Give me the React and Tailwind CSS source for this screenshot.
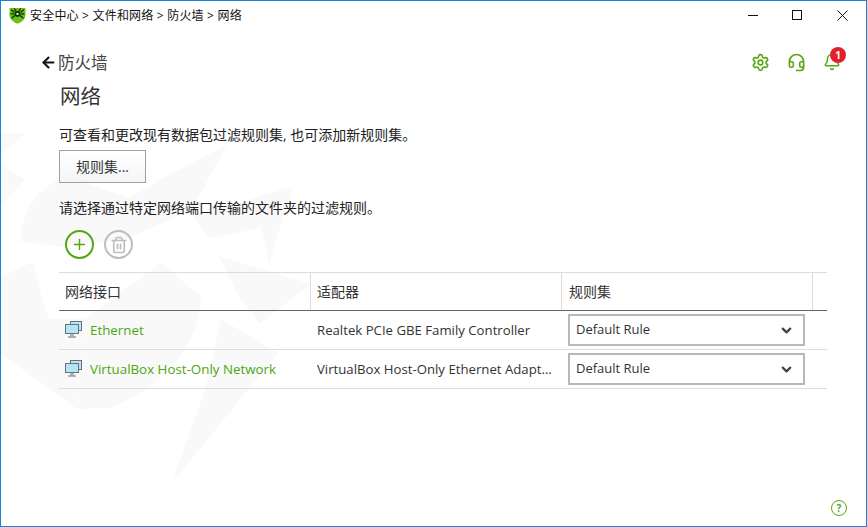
import React from "react";
import { ArrowLeft, Bell, ChevronDown, Headset, Plus, Settings, Trash2 } from "lucide-react";

const FONT = "font-['Open_Sans','Noto_Sans_CJK_SC',sans-serif]";

const networks = [
  { name: "Ethernet", adapter: "Realtek PCIe GBE Family Controller", rule: "Default Rule" },
  { name: "VirtualBox Host-Only Network", adapter: "VirtualBox Host-Only Ethernet Adapt...", rule: "Default Rule" },
];

const ShieldLogo = () => (
  <svg width="17" height="17" viewBox="0 0 16 16">
    <path d="M0.5 1 H15.5 V8 Q15 13 8 15.8 Q1 13 0.5 8 Z" fill="#6cc017" />
    <circle cx="8" cy="6.5" r="2.7" fill="#10300a" />
    <path d="M2 2.5 L5 5 M14 2.5 L11 5 M1.5 6.5 H5 M14.5 6.5 H11 M2.5 10.5 L5.5 8 M13.5 10.5 L10.5 8 M5 1.5 L7 4.5 M11 1.5 L9 4.5" stroke="#10300a" strokeWidth="1.2" fill="none" />
    <circle cx="8" cy="6.5" r="1.1" fill="#d8f0b0" />
  </svg>
);

const Watermark = () => (
  <svg className="absolute top-0 left-0 pointer-events-none" width="330" height="500" viewBox="0 0 330 500">
    <g fill="#f9f9f9">
      <path d="M0 132 H26 L0 152 Z" />
      <path d="M0 163 L24 179 L0 204 Z" />
      <path d="M19 240 Q22 190 66 176 L128 197 L162 177 L226 144 L190 210 L125 238 L60 246 Z" />
      <path d="M292 185 L268 262 L260 227 L208 237 L192 216 Z" />
      <path d="M217 255 L310 283 L259 323 L236 292 Z" />
      <path d="M-1 276 L32 261 L43 305 L48 318 L84 318 L76 408 L0 353 Z" />
      <path d="M76 408 L110 407 Q196 370 200 295 L160 262 L84 318 Z" />
      <path d="M220 318 L277 352 L171 482 L205 385 Z" />
    </g>
  </svg>
);

const MonitorIcon = () => (
  <svg width="17" height="17" viewBox="0 0 17 17" className="shrink-0">
    <rect x="5.5" y="0.5" width="11" height="9" fill="#b5e4f2" stroke="#67727c" />
    <rect x="0.5" y="3.5" width="13" height="9" fill="#b5e4f2" stroke="#67727c" />
    <path d="M6 13 V15.5 M8 13 V15.5 M3 16 H11" stroke="#67727c" fill="none" />
  </svg>
);

export default function App() {
  return (
    <div className={`${FONT} relative w-[867px] h-[527px] overflow-hidden bg-white border border-[#1883d7] text-[14px] text-[#222]`}>
      <Watermark />

      <div className="relative">
        <div className="flex items-center h-[29px] pl-[8px]">
          <ShieldLogo />
          <span className="ml-[4px] text-[12px] tracking-[0.2px] text-[#111]">安全中心 &gt; 文件和网络 &gt; 防火墙 &gt; 网络</span>
          <div className="ml-auto flex items-center">
            <svg width="11" height="11" viewBox="0 0 11 11" className="mr-[33px]"><path d="M0 5.5 H10" stroke="#111" /></svg>
            <svg width="11" height="11" viewBox="0 0 11 11" className="mr-[34px]"><rect x="0.5" y="0.5" width="9" height="9" fill="none" stroke="#111" /></svg>
            <svg width="11" height="11" viewBox="0 0 11 11" className="mr-[18px]"><path d="M0.5 0.5 L10.5 10.5 M10.5 0.5 L0.5 10.5" stroke="#111" /></svg>
          </div>
        </div>

        <div className="flex items-center h-[24px] mt-[20px] pl-[39px] pr-[25px]">
          <ArrowLeft size={17} strokeWidth={3} className="text-[#111]" />
          <span className="ml-[1px] pt-[2px] text-[16.5px] text-[#444]">防火墙</span>
          <div className="ml-auto flex items-center gap-[17px] text-[#55a611]">
            <Settings size={19} strokeWidth={2} />
            <Headset size={19} strokeWidth={2} />
            <div className="relative w-[18px] h-[18px]">
              <Bell size={18} strokeWidth={2} />
              <span className="absolute top-[-6px] left-[7px] w-[16px] h-[16px] rounded-full bg-[#e2202c] text-white text-[10px] font-bold leading-[16px] text-center">1</span>
            </div>
          </div>
        </div>

        <div className="pl-[58px] pr-[39px]">
          <h1 className="mt-[7px] h-[30px] text-[20.5px] leading-[30px] text-[#333] font-normal pl-[1px]">网络</h1>
          <p className="mt-[14px] h-[20px] leading-[20px]">可查看和更改现有数据包过滤规则集, 也可添加新规则集。</p>
          <button className="block mt-[5px] w-[87px] h-[33px] border border-[#a0a0a0] bg-gradient-to-b from-white to-[#f4f5f7] text-[#333]">规则集...</button>
          <p className="mt-[15px] h-[20px] leading-[20px]">请选择通过特定网络端口传输的文件夹的过滤规则。</p>

          <div className="flex items-center gap-[10px] mt-[12px] ml-[6px]">
            <button className="flex items-center justify-center w-[29px] h-[29px] rounded-full border-2 border-[#55a611] text-[#55a611]">
              <Plus size={17} strokeWidth={2} />
            </button>
            <button className="flex items-center justify-center w-[29px] h-[29px] rounded-full border-2 border-[#bdbdbd] text-[#bdbdbd]">
              <Trash2 size={18} strokeWidth={2.2} />
            </button>
          </div>

          <div className="mt-[13px] w-[768px] border-t border-[#dcdcdc]">
            <div className="grid grid-cols-[252px_251px_251px_14px] h-[38px] border-b border-[#666]">
              <div className="flex items-center pl-[6px] border-r border-[#dcdcdc] text-[#333]">网络接口</div>
              <div className="flex items-center pl-[6px] border-r border-[#dcdcdc] text-[#333]">适配器</div>
              <div className="flex items-center pl-[7px] border-r border-[#dcdcdc] text-[#333]">规则集</div>
              <div />
            </div>
            {networks.map((network) => (
              <div key={network.name} className="grid grid-cols-[252px_251px_251px_14px] h-[39px] border-b border-[#dcdcdc] items-center text-[13.2px]">
                <div className="flex items-center pl-[6px] gap-[8px] text-[#4ea60e]">
                  <MonitorIcon />
                  <span className="pt-[1px] text-[13.35px]">{network.name}</span>
                </div>
                <div className="pl-[6px] pt-[1px] text-[#333] whitespace-nowrap">{network.adapter}</div>
                <button className="flex items-center justify-between w-[237px] h-[32px] ml-[6px] pl-[6px] pr-[9px] border-2 border-[#b8b8b8] bg-white text-[#333] text-[13px]">
                  <span>{network.rule}</span>
                  <ChevronDown size={15} strokeWidth={3.5} className="text-[#444]" />
                </button>
                <div />
              </div>
            ))}
          </div>
        </div>
      </div>

      <div className="absolute right-[19px] bottom-[10px] flex items-center justify-center w-[16px] h-[16px] rounded-full border-[1.5px] border-[#55a611] text-[#55a611] text-[10px] font-bold">?</div>
    </div>
  );
}
